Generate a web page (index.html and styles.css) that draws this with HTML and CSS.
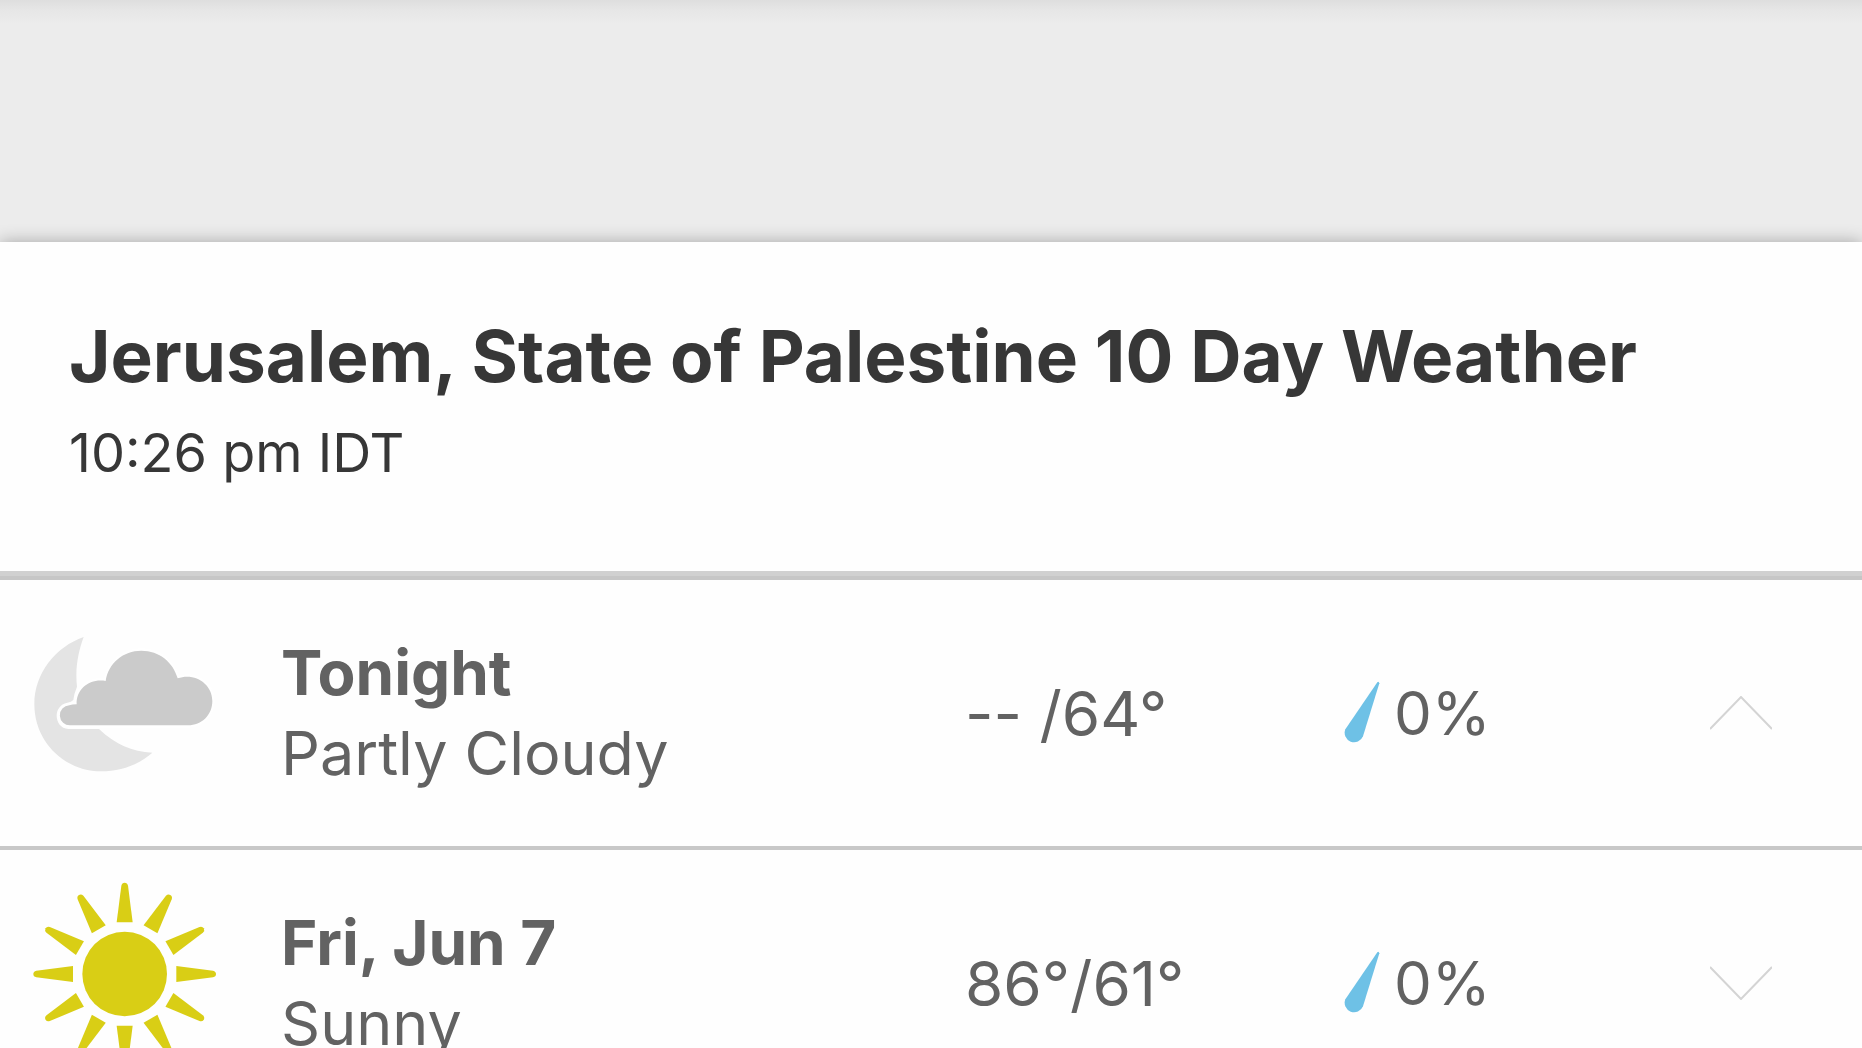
FILE: index.html
```html
<!DOCTYPE html>
<html lang="en">
<head>
<meta charset="utf-8">
<meta name="viewport" content="width=device-width, initial-scale=1">
<title>10 Day Weather</title>
<link rel="stylesheet" href="styles.css">
</head>
<body>
<svg class="defs" aria-hidden="true">
  <symbol id="drop" viewBox="126 60 120 198">
    <path d="M232 67Q236 62 238 70L189 229A28 28 0 1 1 136 208Z"/>
  </symbol>
  <path id="ray" d="M350 186L364 76Q366 67 374 67Q382 67 384 76L398 186Z"/>
</svg>
<div class="spacer"></div>
<main class="forecast">
  <header class="heading">
    <h1 class="title">Jerusalem, State of Palestine 10 Day Weather</h1>
    <p class="time">10:26 pm IDT</p>
  </header>
  <ul class="days">
    <li class="day">
      <svg class="icon" viewBox="84 30 570 570" role="img" aria-label="Partly cloudy night">
        <path fill="#e4e4e4" d="M251 114C168 143 103 222 103 316C103 427 192 517 303 517C362 517 415 498 457 461C396 458 346 436 297 390H205C162 388 156 320 202 311Q214 309 220 303Q222 284 231 263C225 210 234 160 251 114Z"/>
        <path fill="#cbcbcb" stroke="#fff" stroke-width="14" paint-order="stroke" d="M211 379A30 30 0 0 1 208 319Q216 316 230 316C228 270 268 238 317 246C325 192 370 155 424 155C478 155 520 190 533 238C585 220 637 255 637 306C637 348 605 379 564 379Z"/>
      </svg>
      <div class="summary">
        <h2 class="name">Tonight</h2>
        <p class="sky">Partly Cloudy</p>
      </div>
      <span class="temps">-- /64°</span>
      <span class="rain"><svg class="drop" aria-hidden="true"><use href="#drop"/></svg>0%</span>
      <button class="toggle" type="button" aria-label="Collapse Tonight" aria-expanded="true">
        <svg class="chevron" viewBox="0 0 62 34" aria-hidden="true"><path d="M0 33L31 1L62 33"/></svg>
      </button>
    </li>
    <li class="day">
      <svg class="icon sun" viewBox="84 56 570 570" role="img" aria-label="Sunny">
        <circle cx="374" cy="341" r="127"/>
        <use href="#ray"/>
        <use href="#ray" transform="rotate(30 374 341)"/>
        <use href="#ray" transform="rotate(60 374 341)"/>
        <use href="#ray" transform="rotate(90 374 341)"/>
        <use href="#ray" transform="rotate(120 374 341)"/>
        <use href="#ray" transform="rotate(150 374 341)"/>
        <use href="#ray" transform="rotate(180 374 341)"/>
        <use href="#ray" transform="rotate(210 374 341)"/>
        <use href="#ray" transform="rotate(240 374 341)"/>
        <use href="#ray" transform="rotate(270 374 341)"/>
        <use href="#ray" transform="rotate(300 374 341)"/>
        <use href="#ray" transform="rotate(330 374 341)"/>
      </svg>
      <div class="summary">
        <h2 class="name">Fri, Jun 7</h2>
        <p class="sky">Sunny</p>
      </div>
      <span class="temps">86°/61°</span>
      <span class="rain"><svg class="drop" aria-hidden="true"><use href="#drop"/></svg>0%</span>
      <button class="toggle" type="button" aria-label="Expand Fri, Jun 7" aria-expanded="false">
        <svg class="chevron" viewBox="0 0 62 34" aria-hidden="true"><path d="M0 1L31 33L62 1"/></svg>
      </button>
    </li>
  </ul>
</main>
</body>
</html>
```
FILE: styles.css
```css
* {
  box-sizing: border-box;
  margin: 0;
  padding: 0;
}

html {
  scrollbar-width: none;
}

body {
  background: #ececec;
  color: #626262;
  font-family: Inter, "Liberation Sans", sans-serif;
  font-size: 60px;
}

.defs {
  display: none;
}

.spacer {
  height: 242px;
  background: linear-gradient(#dedede, #e6e6e6 10px, #ececec 24px);
}

.forecast {
  background: #fefefe;
  box-shadow: 0 0 16px rgba(0, 0, 0, 0.3);
}

.heading {
  padding: 72px 69px 86px;
  border-bottom: 5px solid #d0d0d0;
  color: #373737;
}

.title {
  margin-bottom: 22px;
  font-size: 71px;
  font-weight: 700;
  line-height: 85px;
}

.time {
  font-size: 54px;
  line-height: 64px;
}

.days {
  border-top: 4px solid #c6c6c6;
  list-style: none;
}

.day {
  display: grid;
  grid-template-columns: 253px 684fr 377fr 368fr 62px;
  align-items: center;
  min-height: 270px;
  padding: 0 90px 0 28px;
  border-bottom: 4px solid #c8c8c8;
}

.icon {
  width: 190px;
  height: 190px;
  margin-bottom: 18px;
}

.sun {
  fill: #d9ce15;
}

.name,
.sky {
  line-height: 81px;
}

.name,
.temps {
  font-size: 62px;
}

.name {
  font-weight: 700;
}

.sky {
  font-size: 61px;
}

.rain {
  display: flex;
  align-items: center;
  gap: 12px;
}

.drop {
  width: 40px;
  height: 66px;
  fill: #6ec1e6;
}

.toggle {
  width: 62px;
  border: 0;
  background: none;
  cursor: pointer;
}

.chevron {
  display: block;
  width: 62px;
  height: 34px;
  fill: none;
  stroke: #d4d4d4;
  stroke-width: 2;
}
```
